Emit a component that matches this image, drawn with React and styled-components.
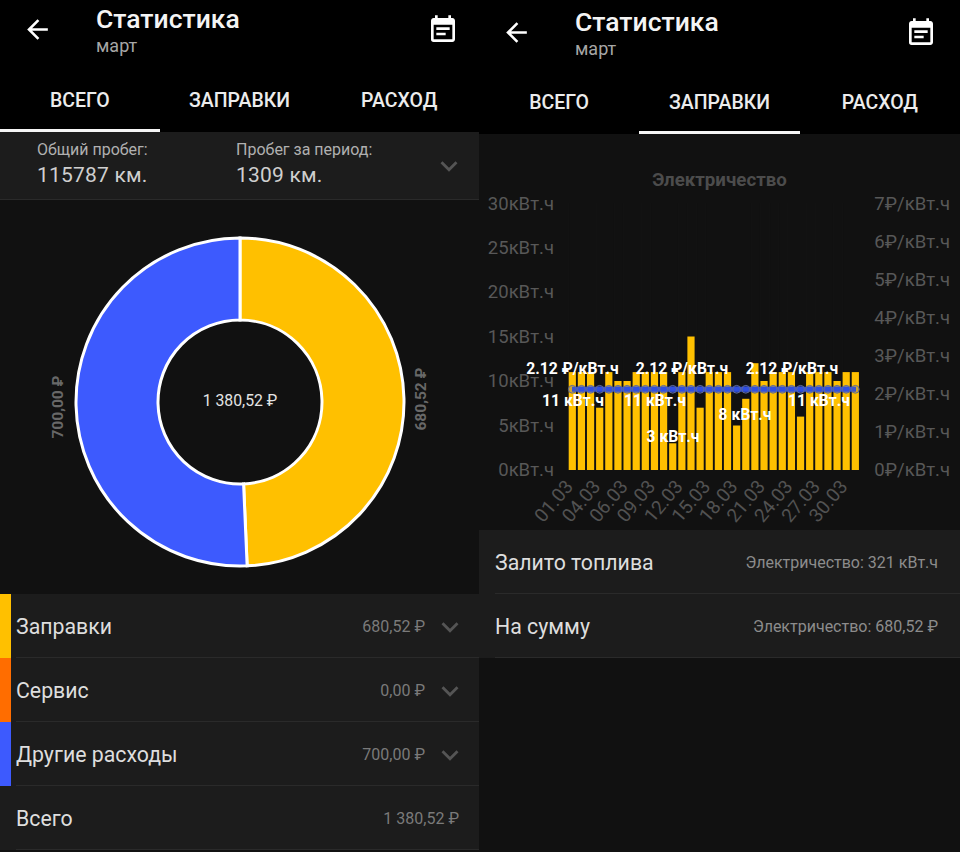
import styled, { createGlobalStyle } from "styled-components";
import { MdArrowBack, MdEventNote, MdExpandMore } from "react-icons/md";

const GlobalStyle = createGlobalStyle`
  html, body {
    margin: 0;
    padding: 0;
    background: #000;
    font-family: Roboto, "Liberation Sans", sans-serif;
  }
`;

const Page = styled.div`
  display: flex;
  width: 960px;
  height: 852px;
  overflow: hidden;
  background: #000;
`;

const Pane = styled.div`
  display: flex;
  flex-direction: column;
  flex: none;
  width: ${({ $width }) => $width}px;
  height: 852px;
  background: #111;
`;

const Header = styled.div`
  display: flex;
  align-items: flex-start;
  height: ${({ $height }) => $height}px;
  padding-top: ${({ $top }) => $top}px;
  box-sizing: border-box;
  background: #000;
  color: #fff;
`;

const BackButton = styled.div`
  display: flex;
  width: 96px;
  padding: 10px 0 0 22px;
  box-sizing: border-box;
  font-size: 31px;
  line-height: 0;
`;

const Titles = styled.div`
  flex: 1;
`;

const Title = styled.div`
  font-size: 26.5px;
  font-weight: 500;
  line-height: 30px;
  color: #f4f4f4;
`;

const Subtitle = styled.div`
  font-size: 18px;
  line-height: 22px;
  margin-top: 1px;
  color: #a6a6a6;
`;

const CalendarButton = styled.div`
  width: 32px;
  margin-right: ${({ $right }) => $right}px;
  padding-top: 10px;
  font-size: 32px;
  line-height: 0;
`;

const Tabs = styled.div`
  display: flex;
  height: 54px;
  background: #000;
`;

const Tab = styled.div`
  flex: 1;
  display: flex;
  align-items: center;
  justify-content: center;
  box-sizing: border-box;
  padding-bottom: 6px;
  font-size: 19.5px;
  font-weight: 500;
  color: #ececec;
  border-bottom: 3px solid ${({ $active }) => ($active ? "#f5f5f5" : "transparent")};
`;

const Summary = styled.div`
  display: flex;
  align-items: center;
  height: 68px;
  padding-left: 37px;
  box-sizing: border-box;
  background: #1c1c1c;
  border-bottom: 1px solid #2a2a2a;
`;

const SummaryCol = styled.div`
  width: 199px;
`;

const SummaryLabel = styled.div`
  font-size: 16px;
  line-height: 20px;
  color: #b0b0b0;
`;

const SummaryValue = styled.div`
  font-size: 21px;
  line-height: 31px;
  color: #cfcfcf;
  letter-spacing: 0.2px;
`;

const Chevron = styled.div`
  display: flex;
  font-size: 34px;
  line-height: 0;
  color: #555;
`;

const SummaryChevron = styled(Chevron)`
  margin-left: -3px;
`;

const DonutArea = styled.div`
  height: 394px;
  background: #111;
`;

const ChartSvg = styled.svg`
  display: block;
`;

const Rows = styled.div`
  display: flex;
  flex-direction: column;
`;

const Row = styled.div`
  position: relative;
  display: flex;
  align-items: center;
  height: 64px;
  box-sizing: border-box;
  padding: 1px ${({ $padRight }) => $padRight}px 0 ${({ $padLeft }) => $padLeft}px;
  background: #1c1c1c;
  &::after {
    content: "";
    position: absolute;
    left: ${({ $padLeft }) => $padLeft}px;
    right: 0;
    bottom: 0;
    height: 1px;
    background: #2a2a2a;
  }
`;

const Marker = styled.div`
  position: absolute;
  left: 0;
  top: 0;
  bottom: 0;
  width: 11px;
  background: ${({ $color }) => $color};
`;

const RowLabel = styled.div`
  flex: 1;
  font-size: 21.3px;
  color: #dedede;
`;

const RowValue = styled.div`
  font-size: 16px;
  color: ${({ $light }) => ($light ? "#8c8c8c" : "#7a7a7a")};
`;

const RowChevron = styled(Chevron)`
  margin-left: 8px;
`;

const ChartArea = styled.div`
  padding-top: 36px;
  background: #111;
`;

const ChartTitle = styled.div`
  height: 20px;
  font-size: 18.7px;
  font-weight: 700;
  line-height: 20px;
  text-align: center;
  color: #4c4c4c;
`;

const AxisText = styled.text`
  font-family: Roboto, "Liberation Sans", sans-serif;
  font-size: ${({ $dim }) => ($dim ? 19 : 18.5)}px;
  fill: ${({ $dim }) => ($dim ? "#525252" : "#585858")};
`;

const DataLabel = styled.text`
  font-family: Roboto, "Liberation Sans", sans-serif;
  font-size: 15.7px;
  font-weight: 700;
  fill: #fff;
  text-anchor: middle;
  dominant-baseline: central;
`;

const DonutLabel = styled.text`
  font-family: Roboto, "Liberation Sans", sans-serif;
  font-size: 15.5px;
  font-weight: 700;
  fill: #686868;
  text-anchor: middle;
  dominant-baseline: central;
`;

const DonutCenter = styled.text`
  font-family: Roboto, "Liberation Sans", sans-serif;
  font-size: 15.8px;
  fill: #e4e4e4;
  text-anchor: middle;
  dominant-baseline: central;
`;

const BAR_VALUES = [11, 11, 11, 7, 11, 10, 10, 11, 11, 11, 11, 3, 11, 15, 7, 11, 11, 11, 5, 8, 12, 10, 11, 11, 11, 6, 11, 11, 11, 10, 11, 11];
const BAR_LEFT = 568.7;
const BAR_PITCH = 9.13;
const BASE_Y = 470;
const UNIT = 8.9;
const LINE_Y = 389.3;

const LEFT_AXIS = ["30", "25", "20", "15", "10", "5", "0"];
const RIGHT_AXIS = ["7", "6", "5", "4", "3", "2", "1", "0"];
const X_LABELS = ["01.03", "04.03", "06.03", "09.03", "12.03", "15.03", "18.03", "21.03", "24.03", "27.03", "30.03"];

const DATA_LABELS = [
  { x: 572.5, y: 368.5, text: "2.12 ₽/кВт.ч" },
  { x: 682, y: 368.5, text: "2.12 ₽/кВт.ч" },
  { x: 792, y: 368.5, text: "2.12 ₽/кВт.ч" },
  { x: 573, y: 400.5, text: "11 кВт.ч" },
  { x: 655, y: 400.5, text: "11 кВт.ч" },
  { x: 819, y: 400.5, text: "11 кВт.ч" },
  { x: 673, y: 436, text: "3 кВт.ч" },
  { x: 745, y: 414, text: "8 кВт.ч" },
];

const EXPENSES = [
  { label: "Заправки", value: "680,52 ₽", color: "#ffc000" },
  { label: "Сервис", value: "0,00 ₽", color: "#ff6d00" },
  { label: "Другие расходы", value: "700,00 ₽", color: "#3d5afe" },
];

// donut sector from angle a to angle b, degrees clockwise from the top
const sector = (cx, cy, r, inner, a, b) => {
  const pt = (rad, deg) => {
    const t = (deg * Math.PI) / 180;
    return `${cx + rad * Math.sin(t)} ${cy - rad * Math.cos(t)}`;
  };
  const large = b - a > 180 ? 1 : 0;
  return `M${pt(r, a)} A${r} ${r} 0 ${large} 1 ${pt(r, b)} L${pt(inner, b)} A${inner} ${inner} 0 ${large} 0 ${pt(inner, a)} Z`;
};

const Donut = () => (
  <ChartSvg width="479" height="394" viewBox="0 200 479 394">
    <path d={sector(240, 402, 164, 82, 0, 177.5)} fill="#ffc000" stroke="#fff" strokeWidth="3" />
    <path d={sector(240, 402, 164, 82, 177.5, 360)} fill="#3d5afe" stroke="#fff" strokeWidth="3" />
    <DonutCenter x="240" y="400">1 380,52 ₽</DonutCenter>
    <DonutLabel transform="translate(58 407) rotate(-90)">700,00 ₽</DonutLabel>
    <DonutLabel transform="translate(421 399) rotate(-90)">680,52 ₽</DonutLabel>
  </ChartSvg>
);

const FuelChart = () => (
  <ChartSvg width="481" height="340" viewBox="479 190 481 340">
    {BAR_VALUES.map((_, i) => (
      <line key={i} x1={BAR_LEFT + i * BAR_PITCH} x2={BAR_LEFT + i * BAR_PITCH} y1="203" y2={BASE_Y} stroke="#131313" />
    ))}
    {LEFT_AXIS.map((v, i) => (
      <AxisText key={v} x="554" y={209.5 + i * 44.4} textAnchor="end">{v}кВт.ч</AxisText>
    ))}
    {RIGHT_AXIS.map((v, i) => (
      <AxisText key={v} x="950" y={209.5 + i * 38.05} textAnchor="end">{v}₽/кВт.ч</AxisText>
    ))}
    {BAR_VALUES.map((v, i) => (
      <rect key={i} x={BAR_LEFT + i * BAR_PITCH} y={BASE_Y - v * UNIT} width="7.2" height={v * UNIT} fill="#ffc000" />
    ))}
    <line x1="572" x2="856" y1={LINE_Y} y2={LINE_Y} stroke="#2f4fe0" strokeWidth="5" />
    {BAR_VALUES.map((_, i) => (
      <circle
        key={i}
        cx={BAR_LEFT + 3.6 + i * BAR_PITCH}
        cy={LINE_Y}
        r="3.9"
        fill={i === 0 || i === BAR_VALUES.length - 1 ? "rgba(90,100,160,0.3)" : "rgba(47,79,224,0.5)"}
        stroke="#5f6a96"
        strokeWidth="1"
      />
    ))}
    {DATA_LABELS.map((l, i) => (
      <DataLabel key={i} x={l.x} y={l.y}>{l.text}</DataLabel>
    ))}
    {X_LABELS.map((v, i) => (
      <AxisText key={v} $dim textAnchor="end" transform={`translate(${574 + i * 27.45} 487) rotate(-50)`}>{v}</AxisText>
    ))}
  </ChartSvg>
);

const TopBar = ({ top, height, right }) => (
  <Header $top={top} $height={height}>
    <BackButton><MdArrowBack /></BackButton>
    <Titles>
      <Title>Статистика</Title>
      <Subtitle>март</Subtitle>
    </Titles>
    <CalendarButton $right={right}><MdEventNote /></CalendarButton>
  </Header>
);

const TAB_NAMES = ["ВСЕГО", "ЗАПРАВКИ", "РАСХОД"];

export default function App() {
  return (
    <Page>
      <GlobalStyle />
      <Pane $width={479}>
        <TopBar top={4} height={78} right={20} />
        <Tabs>
          {TAB_NAMES.map((t, i) => <Tab key={t} $active={i === 0}>{t}</Tab>)}
        </Tabs>
        <Summary>
          <SummaryCol>
            <SummaryLabel>Общий пробег:</SummaryLabel>
            <SummaryValue>115787 км.</SummaryValue>
          </SummaryCol>
          <SummaryCol>
            <SummaryLabel>Пробег за период:</SummaryLabel>
            <SummaryValue>1309 км.</SummaryValue>
          </SummaryCol>
          <SummaryChevron><MdExpandMore /></SummaryChevron>
        </Summary>
        <DonutArea><Donut /></DonutArea>
        <Rows>
          {EXPENSES.map(e => (
            <Row key={e.label} $padLeft={16} $padRight={12}>
              <Marker $color={e.color} />
              <RowLabel>{e.label}</RowLabel>
              <RowValue>{e.value}</RowValue>
              <RowChevron><MdExpandMore /></RowChevron>
            </Row>
          ))}
          <Row $padLeft={16} $padRight={20}>
            <RowLabel>Всего</RowLabel>
            <RowValue>1 380,52 ₽</RowValue>
          </Row>
        </Rows>
      </Pane>
      <Pane $width={481}>
        <TopBar top={7} height={80} right={23} />
        <Tabs>
          {TAB_NAMES.map((t, i) => <Tab key={t} $active={i === 1}>{t}</Tab>)}
        </Tabs>
        <ChartArea>
          <ChartTitle>Электричество</ChartTitle>
          <FuelChart />
        </ChartArea>
        <Rows>
          <Row $padLeft={16} $padRight={22}>
            <RowLabel>Залито топлива</RowLabel>
            <RowValue $light>Электричество: 321 кВт.ч</RowValue>
          </Row>
          <Row $padLeft={16} $padRight={22}>
            <RowLabel>На сумму</RowLabel>
            <RowValue $light>Электричество: 680,52 ₽</RowValue>
          </Row>
        </Rows>
      </Pane>
    </Page>
  );
}
